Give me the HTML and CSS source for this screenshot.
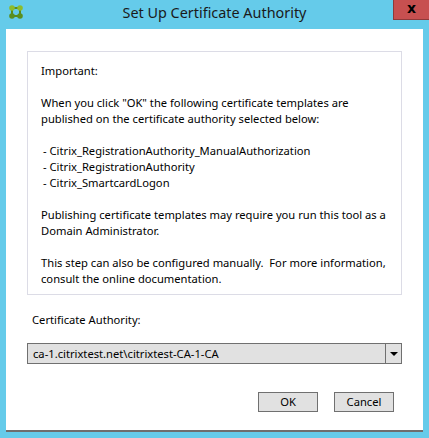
FILE: index.html
```html
<!DOCTYPE html>
<html>
<head>
<meta charset="utf-8">
<link rel="stylesheet" href="styles.css">
</head>
<body>
<div class="window">
  <div class="titlebar">
    <svg class="appicon" width="14" height="14" viewBox="0 0 14 14">
      <rect x="3" y="3" width="8" height="8" fill="none" stroke="#5a8a1e" stroke-width="2"/>
      <circle cx="3" cy="3" r="2.8" fill="#8cbc2c"/>
      <circle cx="11" cy="3" r="2.8" fill="#8cbc2c"/>
      <circle cx="3" cy="11" r="2.8" fill="#5a8f1f"/>
      <circle cx="11" cy="11" r="2.8" fill="#5a8f1f"/>
    </svg>
    <div class="title">Set Up Certificate Authority</div>
    <div class="close">x</div>
  </div>
  <div class="client">
    <div class="infobox">
      <p>Important:</p>
      <p>When you click "OK" the following certificate templates are<br>published on the certificate authority selected below:</p>
      <p class="list">- Citrix_RegistrationAuthority_ManualAuthorization<br>- Citrix_RegistrationAuthority<br>- Citrix_SmartcardLogon</p>
      <p>Publishing certificate templates may require you run this tool as a<br>Domain Administrator.</p>
      <p>This step can also be configured manually.&nbsp; For more information,<br>consult the online documentation.</p>
    </div>
    <div class="label">Certificate Authority:</div>
    <div class="combo">
      <div class="combo-text">ca-1.citrixtest.net\citrixtest-CA-1-CA</div>
      <div class="combo-btn"><span class="arrow"></span></div>
    </div>
    <div class="buttons">
      <div class="btn">OK</div>
      <div class="btn">Cancel</div>
    </div>
  </div>
</div>
</body>
</html>
```

FILE: styles.css
```css
html, body {
  margin: 0;
  padding: 0;
}
body {
  background: #65cbea;
  width: 429px;
  height: 438px;
  overflow: hidden;
  font-family: "Noto Sans", "Open Sans", sans-serif;
  font-size: 11.2px;
  color: #000;
}
.window {
  width: 429px;
  height: 438px;
  display: flex;
  flex-direction: column;
}
.titlebar {
  height: 29px;
  display: flex;
  align-items: flex-start;
  position: relative;
}
.appicon {
  margin: 5px 0 0 9px;
}
.title {
  position: absolute;
  left: 0;
  right: 0;
  top: 3px;
  text-align: center;
  font-size: 14.4px;
  color: #1a1a1a;
  line-height: 20px;
}
.close {
  position: absolute;
  right: 0;
  top: 0;
  width: 35px;
  height: 19px;
  background: #c75050;
  border: 1px solid #8e3a3a;
  border-top: none;
  border-right: none;
  color: #000;
  font-weight: bold;
  font-size: 14px;
  line-height: 17px;
  text-align: center;
  font-family: "DejaVu Sans", sans-serif;
}
.client {
  margin-left: 6px;
  width: 417px;
  background: #fff;
  border-bottom: 2px solid #6e6e6e;
  display: flex;
  flex-direction: column;
  padding: 22px 0 0 21px;
  box-sizing: border-box;
  height: 403px;
}
.infobox {
  width: 375px;
  height: 244px;
  box-sizing: border-box;
  border: 1px solid #dcdce6;
  padding: 11px 0 0 13px;
  line-height: 16px;
}
.infobox p {
  margin: 0 0 16px 0;
}
.list {
  padding-left: 2px;
}
.label {
  margin: 17px 0 0 5px;
  line-height: 16px;
}
.combo {
  margin-top: 15px;
  width: 375px;
  height: 21px;
  box-sizing: border-box;
  border: 1px solid #707070;
  background: #e1e1e1;
  display: flex;
}
.combo-text {
  flex: 1;
  padding-left: 5px;
  line-height: 19px;
}
.combo-btn {
  width: 15px;
  border-left: 1px solid #707070;
  display: flex;
  align-items: center;
  justify-content: center;
}
.arrow {
  width: 0;
  height: 0;
  border-left: 4px solid transparent;
  border-right: 4px solid transparent;
  border-top: 4px solid #000;
}
.buttons {
  display: flex;
  gap: 16px;
  margin: 28px 0 0 231px;
}
.btn {
  width: 60px;
  height: 20px;
  box-sizing: border-box;
  border: 1px solid #707070;
  background: #e1e1e1;
  text-align: center;
  line-height: 18px;
}
```
